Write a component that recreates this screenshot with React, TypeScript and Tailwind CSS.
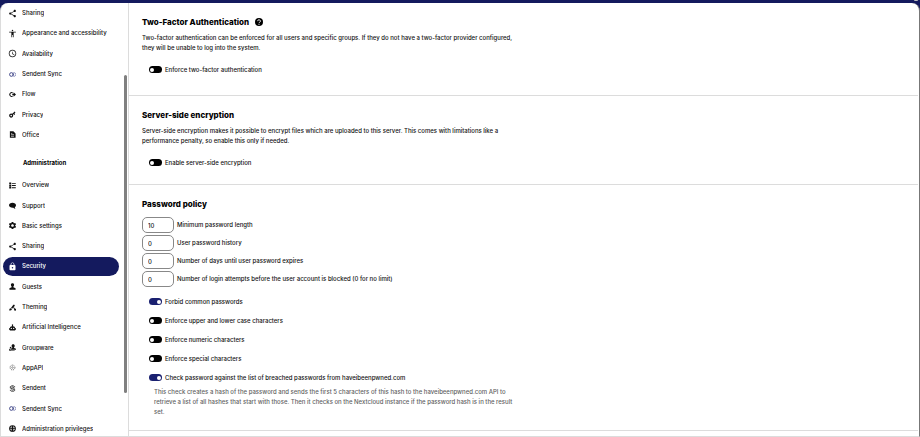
import React from 'react';
import { MdShare, MdAccessibility, MdAccessTime, MdSettings, MdLock } from 'react-icons/md';

const Svg = ({ children }: { children: React.ReactNode }) => (
  <svg viewBox="0 0 16 16" className="size-[7px]" fill="currentColor" xmlns="http://www.w3.org/2000/svg">
    {children}
  </svg>
);

const SyncIcon = () => (
  <Svg>
    <g fill="none" strokeWidth={1.8}>
      <circle cx="5.5" cy="8" r="4.2" stroke="#1b2270" />
      <path d="M9.5 4.6a4 4 0 1 1 0 6.8" stroke="#6a6fa8" />
      <path d="M9.3 6v4" stroke="#1b2270" />
    </g>
  </Svg>
);

const FlowIcon = () => (
  <Svg>
    <path d="M8.5 4.2A4.4 4.4 0 1 0 8.5 11.8" fill="none" stroke="currentColor" strokeWidth={2.4} />
    <path d="M7.5 6.2h3V3L16 8l-5.5 5V9.8h-3z" />
  </Svg>
);

const KeyIcon = () => (
  <Svg>
    <circle cx="5" cy="10.5" r="3.3" fill="none" stroke="currentColor" strokeWidth={2.8} />
    <path d="M7 8.5 14 1.800M10.5 5.2l2.800 2.800" fill="none" stroke="currentColor" strokeWidth={2.6} />
  </Svg>
);

const OfficeIcon = () => (
  <Svg>
    <path fillRule="evenodd" d="M2 .5h8L15 5.500V15.500H2zM4.500 5v1.300h3V5zm0 3v1.300h7V8zm0 3v1.300h7V11z" />
  </Svg>
);

const OverviewIcon = () => (
  <Svg>
    <path d="M.5 1h4.500v4H.5zM.5 6h4.500v4H.5zM.5 11h4.500v4H.5zM6.500 2H15.500v2H6.500zM6.500 7H15.500v2H6.500zM6.500 12H15.500v2H6.500z" />
  </Svg>
);

const SupportIcon = () => (
  <Svg>
    <path d="M8 1.500c4.500 0 8 2.500 8 6 0 1.900-1 3.500-2.700 4.500.1 1.300.6 2.300 1.500 3.300-2.200-.2-3.800-1-4.800-2.300C4.800 13.600 0 11.200 0 7.500c0-3.500 3.500-6 8-6z" />
  </Svg>
);

const GuestIcon = () => (
  <Svg>
    <path d="M8 .5c2.200 0 3.700 1.500 3.700 3.700 0 1.600-.7 3-1.700 3.900v1.500L15 12v3.500H1V12l5-2.400V8.100c-1-.9-1.700-2.300-1.700-3.900C4.300 2 5.800.5 8 .5z" />
  </Svg>
);

const ThemingIcon = () => (
  <Svg>
    <path d="M.5 15c0-2.500.8-5.200 3.200-5.500l2.800 2.500c-.2 2.400-3 3-6 3z" />
    <path d="M4.500 9 9.500 2.500l2-1.500L13.500 4l-6.500 7zM12 9l4 2.500V15h-4z" />
    <path d="m10 6.500 4 8" fill="none" stroke="currentColor" strokeWidth={1.8} />
  </Svg>
);

const RobotIcon = () => (
  <Svg>
    <path
      fillRule="evenodd"
      d="M8 .5a1.900 1.900 0 0 1 1 3.300v1.400h.5c2.600 0 4.500 2 4.500 4.500h2v3.500h-2V15H2v-1.800H0V9.700h2c0-2.500 1.900-4.500 4.500-4.500H7V3.800A1.900 1.900 0 0 1 8 .5zM5.300 8.800a1.400 1.400 0 1 0 0 2.800 1.400 1.400 0 0 0 0-2.800zm5.400 0a1.400 1.400 0 1 0 0 2.800 1.400 1.400 0 0 0 0-2.800z"
    />
  </Svg>
);

const GroupIcon = () => (
  <Svg>
    <path d="M9.500.5c2.200 0 3.600 1.400 3.600 3.600 0 1.500-.6 2.800-1.500 3.600v1.200l4.400 1.800V13H4v-2.300l3.400-1.800V7.700c-.9-.8-1.500-2.100-1.500-3.600C5.900 1.900 7.300.5 9.500.5z" />
    <path d="M3.800 6c1.100 0 2 .8 2 2L3 10v2.500l1.200 1.500H13v1.500H.5v-4l2-1.500A2.500 2.500 0 0 1 3.800 6z" />
  </Svg>
);

const ApiIcon = () => (
  <Svg>
    <circle cx="8" cy="8" r="5.5" fill="none" stroke="#555" strokeWidth={2} strokeDasharray="2.5 1.82" />
    <circle cx="8" cy="8" r="1.8" fill="none" stroke="#555" strokeWidth={1.3} />
  </Svg>
);

const SendentIcon = () => (
  <Svg>
    <g fill="none" stroke="currentColor" strokeWidth={1.7}>
      <path d="M13 5V3.7L8 1 3 3.7v3.5l10 3v2.500L8 15.300 3 12.500V11" />
      <path d="M10.500 5.500 8 4 5.500 5.300M13 7.500 8 5.500M5.500 10.500 8 12l2.500-1.200" />
    </g>
  </Svg>
);

const PrivilegesIcon = () => (
  <Svg>
    <circle cx="8" cy="8" r="6.5" fill="none" stroke="currentColor" strokeWidth={2.4} />
    <path d="M6.500 2h3v4H14v2.400h-4V14H6V8.400H2V6h4.500z" />
  </Svg>
);

// the Material icons carry their own padding, so they are drawn a little larger
const md = '-m-px size-[9px]';

const personalItems = [
  { name: 'Sharing', icon: <MdShare className={md} /> },
  { name: 'Appearance and accessibility', icon: <MdAccessibility className={md} /> },
  { name: 'Availability', icon: <MdAccessTime className={md} /> },
  { name: 'Sendent Sync', icon: <SyncIcon /> },
  { name: 'Flow', icon: <FlowIcon /> },
  { name: 'Privacy', icon: <KeyIcon /> },
  { name: 'Office', icon: <OfficeIcon /> },
];

const adminItems = [
  { name: 'Overview', icon: <OverviewIcon /> },
  { name: 'Support', icon: <SupportIcon /> },
  { name: 'Basic settings', icon: <MdSettings className={md} /> },
  { name: 'Sharing', icon: <MdShare className={md} /> },
  { name: 'Security', icon: <MdLock className={md} />, active: true },
  { name: 'Guests', icon: <GuestIcon /> },
  { name: 'Theming', icon: <ThemingIcon /> },
  { name: 'Artificial Intelligence', icon: <RobotIcon /> },
  { name: 'Groupware', icon: <GroupIcon /> },
  { name: 'AppAPI', icon: <ApiIcon /> },
  { name: 'Sendent', icon: <SendentIcon /> },
  { name: 'Sendent Sync', icon: <SyncIcon /> },
  { name: 'Administration privileges', icon: <PrivilegesIcon /> },
];

const numberFields = [
  { id: 'min-length', label: 'Minimum password length', value: 10 },
  { id: 'history', label: 'User password history', value: 0 },
  { id: 'expiration', label: 'Number of days until user password expires', value: 0 },
  { id: 'attempts', label: 'Number of login attempts before the user account is blocked (0 for no limit)', value: 0 },
];

const policySwitches = [
  { id: 'common', label: 'Forbid common passwords', on: true },
  { id: 'case', label: 'Enforce upper and lower case characters', on: false },
  { id: 'numeric', label: 'Enforce numeric characters', on: false },
  { id: 'special', label: 'Enforce special characters', on: false },
  { id: 'breached', label: 'Check password against the list of breached passwords from haveibeenpwned.com', on: true },
];

type Item = { name: string; icon: React.ReactNode; active?: boolean };

const NavItem = ({ item }: { item: Item }) => (
  <li className="flex min-h-5 flex-1 items-center">
    <a
      href="#"
      aria-current={item.active ? 'page' : undefined}
      className={
        item.active
          ? 'flex h-[19px] w-full items-center gap-1.5 rounded-full bg-[#141a5e] px-1.5 text-white'
          : 'flex h-[19px] w-full items-center gap-1.5 rounded-full px-1.5 hover:bg-gray-100'
      }
    >
      <span className="flex size-[7px] shrink-0">
        <span className="contents [&>svg]:shrink-0">{item.icon}</span>
      </span>
      <span className="truncate">{item.name}</span>
    </a>
  </li>
);

const Switch = ({ id, label, on = false }: { id: string; label: string; on?: boolean }) => (
  <div className="flex h-[19px] items-center gap-[3px] pl-[7px]">
    <input
      id={id}
      type="checkbox"
      role="switch"
      defaultChecked={on}
      className="flex h-[7px] w-[13px] shrink-0 appearance-none items-center rounded-full bg-black px-px before:size-1 before:rounded-full before:bg-white checked:justify-end checked:bg-[#1a2070]"
    />
    <label htmlFor={id}>{label}</label>
  </div>
);

const Sidebar = () => (
  <aside className="relative flex w-[128px] shrink-0 flex-col border-r border-[#dcdcdc]">
    <nav className="-mb-[3px] flex flex-1 flex-col pr-[9px] pl-0.5">
      <ul className="flex flex-[7] flex-col">
        {personalItems.map((item) => (
          <NavItem key={item.name} item={item} />
        ))}
      </ul>
      <h2 className="flex h-[30px] items-center pt-1.5 pl-5 font-bold text-black">Administration</h2>
      <ul className="flex flex-[13] flex-col">
        {adminItems.map((item) => (
          <NavItem key={item.name} item={item} />
        ))}
      </ul>
    </nav>
    {/* scrollbar thumb */}
    <div className="absolute top-[72px] right-px bottom-[43px] w-[3px] rounded-full bg-[#808080]"></div>
  </aside>
);

const App = () => {
  return (
    <div className="flex min-h-screen flex-col bg-[#141a5e] font-['Inter','Liberation_Sans',sans-serif] text-[6px] leading-[10px] font-medium text-[#111]">
      <header className="relative h-[3px]">
        <span className="absolute top-0 right-[2px] h-px w-1 rounded-b-full bg-[#b8bcc0]"></span>
      </header>

      <div className="flex flex-1 overflow-hidden rounded-t-[8px] border-r border-b border-l border-r-[#777] border-b-[#dcdcdc] border-l-[#dcdcdc] bg-white">
        <Sidebar />

        <main className="min-w-0 flex-1 pr-px">
          {/* Two-factor */}
          <section className="border-b border-[#dcdcdc] px-[13px] pt-[13px] pb-4">
            <h2 className="flex h-3 items-center gap-1.5 text-[8px] font-extrabold text-black">
              Two-Factor Authentication
              <a href="#" aria-label="Help">
                <svg viewBox="0 0 16 16" className="size-2" xmlns="http://www.w3.org/2000/svg">
                  <circle cx="8" cy="8" r="8" fill="#000" />
                  <path d="M5.3 6.300a2.700 2.700 0 1 1 4 2.300Q8 9.300 8 10.300" fill="none" stroke="#fff" strokeWidth={1.9} />
                  <circle cx="8" cy="12.5" r="1.2" fill="#fff" />
                </svg>
              </a>
            </h2>
            <p className="mt-[5px] max-w-[378px]">
              Two-factor authentication can be enforced for all users and specific groups. If they do not have a
              two-factor provider configured, they will be unable to log into the system.
            </p>
            <div className="mt-[7px]">
              <Switch id="two-factor" label="Enforce two-factor authentication" />
            </div>
          </section>

          {/* Encryption */}
          <section className="border-b border-[#dcdcdc] px-[13px] pt-[13px] pb-3">
            <h2 className="flex h-3 items-center text-[8px] font-extrabold text-black">Server-side encryption</h2>
            <p className="mt-[5px] max-w-[378px]">
              Server-side encryption makes it possible to encrypt files which are uploaded to this server. This comes
              with limitations like a performance penalty, so enable this only if needed.
            </p>
            <div className="mt-[7px]">
              <Switch id="encryption" label="Enable server-side encryption" />
            </div>
          </section>

          {/* Password policy */}
          <section className="border-b border-[#dcdcdc] px-[13px] pt-[13px] pb-[13px]">
            <h2 className="flex h-3 items-center text-[8px] font-extrabold text-black">Password policy</h2>
            <div className="mt-[7px] flex flex-col gap-0.5">
              {numberFields.map((f) => (
                <div key={f.id} className="flex items-center gap-[3px]">
                  <input
                    id={f.id}
                    type="text"
                    inputMode="numeric"
                    defaultValue={f.value}
                    className="h-4 w-8 rounded-[5px] border border-[#888] bg-white pl-[5px]"
                  />
                  <label htmlFor={f.id}>{f.label}</label>
                </div>
              ))}
            </div>
            <div className="mt-[5px]">
              {policySwitches.map((s) => (
                <Switch key={s.id} id={s.id} label={s.label} on={s.on} />
              ))}
            </div>
            <p className="max-w-[378px] pl-3 text-[#5f5f5f]">
              This check creates a hash of the password and sends the first 5 characters of this hash to the
              haveibeenpwned.com API to retrieve a list of all hashes that start with those. Then it checks on the
              Nextcloud instance if the password hash is in the result set.
            </p>
          </section>
        </main>
      </div>
    </div>
  );
};

export default App;
